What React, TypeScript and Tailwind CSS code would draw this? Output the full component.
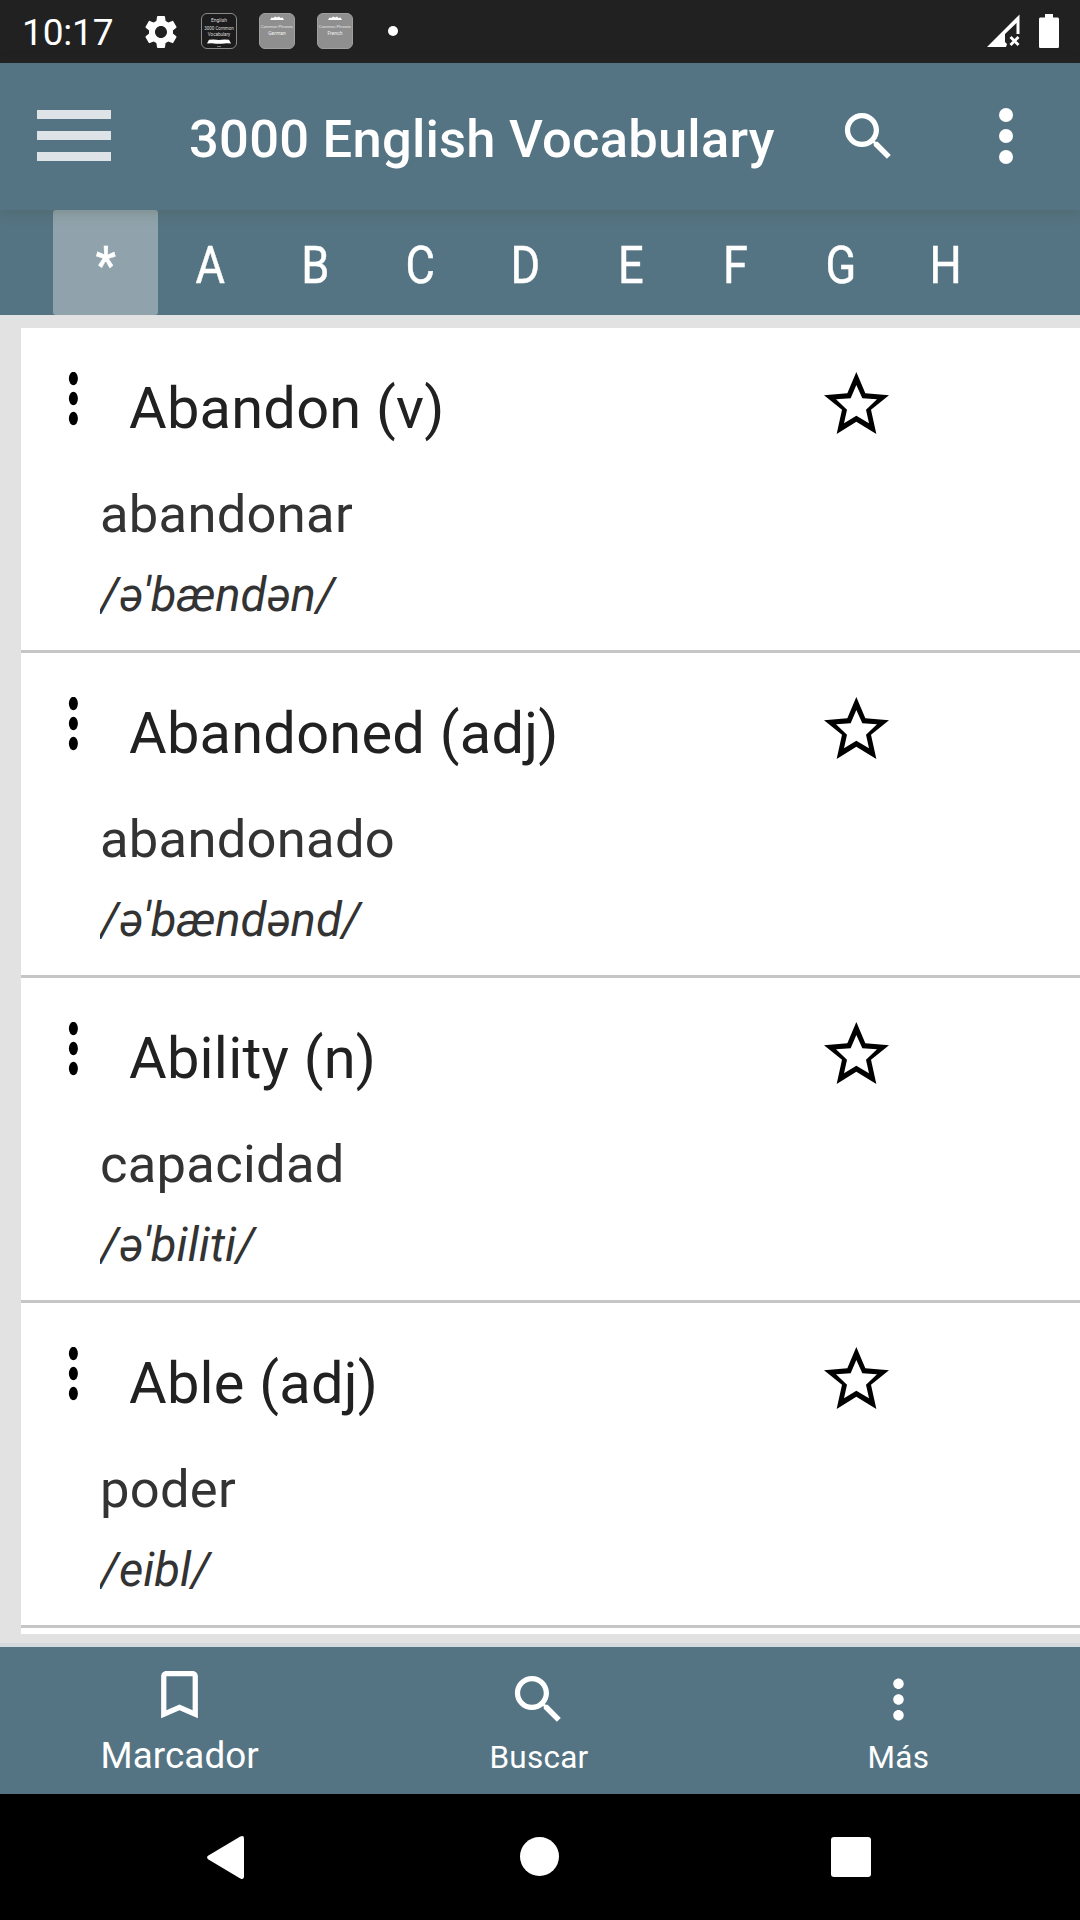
import React from "react";

const SEARCH =
  "M15.5 14h-.79l-.28-.27C15.41 12.59 16 11.11 16 9.5 16 5.91 13.09 3 9.5 3S3 5.91 3 9.5 5.91 16 9.5 16c1.61 0 3.09-.59 4.23-1.57l.27.28v.79l5 4.99L20.49 19l-4.99-5zm-6 0C7.01 14 5 11.99 5 9.5S7.01 5 9.5 5 14 7.01 14 9.5 11.99 14 9.5 14z";
const BOOKMARK =
  "M17 3H7c-1.1 0-1.99.9-1.99 2L5 21l7-3 7 3V5c0-1.1-.9-2-2-2zm0 15l-5-2.18L7 18V5h10v13z";
const MORE =
  "M12 8c1.1 0 2-.9 2-2s-.9-2-2-2-2 .9-2 2 .9 2 2 2zm0 2c-1.1 0-2 .9-2 2s.9 2 2 2 2-.9 2-2-.9-2-2-2zm0 6c-1.1 0-2 .9-2 2s.9 2 2 2 2-.9 2-2-.9-2-2-2z";
const GEAR =
  "M19.14 12.94c.04-.3.06-.61.06-.94 0-.32-.02-.64-.07-.94l2.03-1.58c.18-.14.23-.41.12-.61l-1.92-3.32c-.12-.22-.37-.29-.59-.22l-2.39.96c-.5-.38-1.03-.7-1.62-.94l-.36-2.54c-.04-.24-.24-.41-.48-.41h-3.84c-.24 0-.43.17-.47.41l-.36 2.54c-.59.24-1.13.57-1.62.94l-2.39-.96c-.22-.08-.47 0-.59.22L2.74 8.87c-.12.21-.08.47.12.61l2.03 1.58c-.05.3-.09.63-.09.94s.02.64.07.94l-2.03 1.58c-.18.14-.23.41-.12.61l1.92 3.32c.12.22.37.29.59.22l2.39-.96c.5.38 1.03.7 1.62.94l.36 2.54c.05.24.24.41.48.41h3.84c.24 0 .44-.17.47-.41l.36-2.54c.59-.24 1.13-.56 1.62-.94l2.39.96c.22.08.47 0 .59-.22l1.92-3.32c.12-.22.07-.47-.12-.61l-2.01-1.58zM12 15.6c-1.98 0-3.6-1.62-3.6-3.6s1.62-3.6 3.6-3.6 3.6 1.62 3.6 3.6-1.62 3.6-3.6 3.6z";

function Icon({ d, className }: { d: string; className: string }) {
  return (
    <svg viewBox="0 0 24 24" fill="currentColor" className={className}>
      <path d={d} />
    </svg>
  );
}

function PhraseBadge({ language }: { language: string }) {
  return (
    <div className="flex h-9 w-9 flex-col items-center overflow-hidden rounded-md border border-[#a0a0a0] bg-[#8f8f8f] pt-[2px] text-white">
      <svg viewBox="0 0 14 4" className="h-[4px] w-[14px] shrink-0" fill="#fff">
        <path d="M0 4 1.500 1.500l2 .6L5 .5l2 1L9 .5l1.500 1.600 2-.6L14 4z" />
      </svg>
      <span className="mt-[4px] text-[4px] leading-[5px] whitespace-nowrap text-[#e0e0e0]">Common Phrases</span>
      <span className="mt-px text-[5px] leading-[6px] text-[#f0f0f0]">{language}</span>
    </div>
  );
}

function StatusBar() {
  return (
    <header className="flex h-[63px] shrink-0 items-start bg-[#212121] pl-[22px] text-white">
      <span className="mt-3 w-[119px] text-[37px] leading-[42px] tracking-[-0.15px]">10:17</span>
      <Icon d={GEAR} className="mt-3 h-10 w-10 shrink-0" />
      <div className="mt-[13px] ml-5 flex gap-[22px]">
        <div className="flex h-9 w-9 flex-col items-center overflow-hidden rounded-md border border-[#8a8a8a] bg-[#1c1c1c] pt-[3px] text-[#dddddd]">
          <span className="text-[5px] leading-[6px]">English</span>
          <span className="mt-[3px] text-[4.5px] leading-[5.5px] whitespace-nowrap">3000 Common</span>
          <span className="text-[4.5px] leading-[5.5px]">Vocabulary</span>
          <svg viewBox="0 0 24 5" className="mt-[2px] h-[5px] w-6 shrink-0" fill="#fff">
            <path d="M2 .8q5-.8 10 .2Q17 0 22 .8l2 3.600q-6-.5-9 .3H9q-3-.8-9-.2z" />
          </svg>
          <span className="mt-[2px] h-px w-1 shrink-0 bg-[#777777]" />
        </div>
        <PhraseBadge language="German" />
        <PhraseBadge language="French" />
      </div>
      <span className="mt-[26px] ml-[35px] h-[10px] w-[10px] rounded-full bg-white" />
      <div className="mt-[14px] mr-[21px] ml-auto flex gap-[19px]">
        <svg viewBox="0 0 33 33" className="h-[33px] w-[33px]" fill="#fff">
          <path d="M0 33 32.500.5V20H29.500V9L18 20v8l2 2-1 3z" />
          <path d="m23.500 23 8 8m0-8-8 8" stroke="#fff" strokeWidth="2.800" />
        </svg>
        <svg viewBox="0 0 20 34" className="h-[34px] w-5" fill="#fff">
          <path d="M6 0h8v3.400h4.400c.9 0 1.600.7 1.600 1.600v27.400c0 .9-.7 1.600-1.600 1.600H1.600C.7 34 0 33.300 0 32.400V5c0-.9.7-1.600 1.600-1.600H6z" />
        </svg>
      </div>
    </header>
  );
}

function AppBar() {
  return (
    <div className="relative z-10 flex h-[147px] shrink-0 items-center bg-[#557483] text-white shadow-[0_2px_12px_rgba(60,80,50,0.28)]">
      <button className="mb-[2px] ml-[37px] flex w-[74px] flex-col gap-3">
        <span className="h-[9px] bg-[#dde3e7]" />
        <span className="h-[9px] bg-[#dde3e7]" />
        <span className="h-[9px] bg-[#dde3e7]" />
      </button>
      <h1 className="mt-[4px] ml-[78px] w-[648px] text-[52.5px] leading-[62px] font-medium tracking-[0.23px] whitespace-nowrap">
        3000 English Vocabulary
      </h1>
      <Icon d={SEARCH} className="h-[63px] w-[63px] shrink-0" />
      <div className="mb-[2px] ml-[99px] flex flex-col gap-[7px]">
        <span className="h-[14px] w-[14px] rounded-full bg-white" />
        <span className="h-[14px] w-[14px] rounded-full bg-white" />
        <span className="h-[14px] w-[14px] rounded-full bg-white" />
      </div>
    </div>
  );
}

const LETTERS = ["*", "A", "B", "C", "D", "E", "F", "G", "H"];

function LetterTabs() {
  return (
    <nav className="flex h-[105px] shrink-0 bg-[#557483] pl-[53px] text-[52.5px] leading-[62px] text-white">
      {LETTERS.map((letter, i) => (
        <button
          key={letter}
          className={
            i === 0
              ? "flex h-[105px] w-[105px] items-center justify-center rounded-[3px] bg-[#90a3ac] pt-1 font-medium"
              : "flex h-[105px] w-[105px] items-center justify-center pt-1"
          }
        >
          <span className="inline-block scale-x-[0.86] [-webkit-text-stroke:0.5px_white]">{letter}</span>
        </button>
      ))}
    </nav>
  );
}

const WORDS = [
  { word: "Abandon (v)", meaning: "abandonar", ipa: "/ə'bændən/" },
  { word: "Abandoned (adj)", meaning: "abandonado", ipa: "/ə'bændənd/" },
  { word: "Ability (n)", meaning: "capacidad", ipa: "/ə'biliti/" },
  { word: "Able (adj)", meaning: "poder", ipa: "/eibl/" },
];

function WordRow({ word, meaning, ipa }: { word: string; meaning: string; ipa: string }) {
  return (
    <li className="h-[325px] border-b-[3px] border-[#c6c6c6] pt-11">
      <div className="flex h-[70px] items-start">
        <svg viewBox="0 0 10 54" className="ml-[47px] h-[54px] w-[10px] shrink-0">
          <ellipse cx="5.400" cy="6.500" rx="4.500" ry="6.800" />
          <ellipse cx="5.400" cy="26.500" rx="4.500" ry="6.800" />
          <ellipse cx="5.400" cy="46.500" rx="4.500" ry="6.800" />
        </svg>
        <h2 className="mt-[2px] ml-[51px] w-[695px] text-[57.75px] leading-[68px] tracking-[0.24px] text-[#212121]">
          {word}
        </h2>
        <svg viewBox="12 12 195 186" className="h-[62px] w-[65px] shrink-0" fillRule="evenodd">
          <path d="M109 12 136 76 207 82 153 125 169 198 109 161 50 198 66 125 12 82 82 76zM109 51 92 91 48 94 81 125 72 166 109 143 147 166 138 125 171 94 127 91z" />
        </svg>
      </div>
      <p className="mt-[41px] ml-[79px] text-[52.5px] leading-[62px] tracking-[0.28px] text-[#333333]">{meaning}</p>
      <p className="mt-[22px] ml-[79px] overflow-hidden text-[47.25px] leading-[56px] text-[#333333] italic">{ipa}</p>
    </li>
  );
}

function BottomBar() {
  return (
    <nav className="grid h-[147px] w-[1078px] shrink-0 grid-cols-3 text-white">
      <button className="flex flex-col items-center pt-4">
        <Icon d={BOOKMARK} className="h-[63px] w-[63px]" />
        <span className="mt-[8px] text-[36.75px] leading-[43px] tracking-[0.1px]">Marcador</span>
      </button>
      <button className="flex flex-col items-center pt-[21px]">
        <Icon d={SEARCH} className="h-[63px] w-[63px]" />
        <span className="mt-[8px] text-[31.5px] leading-[37px] tracking-[0.25px]">Buscar</span>
      </button>
      <button className="flex flex-col items-center pt-[21px]">
        <Icon d={MORE} className="h-[63px] w-[63px]" />
        <span className="mt-[8px] text-[31.5px] leading-[37px] tracking-[0.25px]">Más</span>
      </button>
    </nav>
  );
}

function SystemNav() {
  return (
    <footer className="flex h-[126px] items-start bg-black pl-[207px]">
      <svg viewBox="0 0 37 43" className="mt-[42px] h-[43px] w-[37px]" fill="#fff">
        <path d="M1 19.800 33.300.6Q37-1 37 2.500v38Q37 44 33.300 42.400L1 23.200Q-.8 21.500 1 19.800z" />
      </svg>
      <span className="mt-[43px] ml-[276px] h-[39px] w-[39px] rounded-full bg-white" />
      <span className="mt-[43px] ml-[272px] h-10 w-10 rounded-[3px] bg-white" />
    </footer>
  );
}

export default function App() {
  return (
    <div className="flex h-[1920px] w-[1080px] flex-col overflow-hidden bg-[#e2e2e2] font-['Roboto',sans-serif]">
      <StatusBar />
      <AppBar />
      <LetterTabs />
      <main className="h-[1332px] shrink-0 border-b-4 border-[#d5dadd] pt-[13px] pl-[21px]">
        <ul className="h-[1306px] overflow-hidden bg-white">
          {WORDS.map((w) => (
            <WordRow key={w.word} {...w} />
          ))}
        </ul>
      </main>
      <div className="bg-[#557483]">
        <BottomBar />
      </div>
      <SystemNav />
    </div>
  );
}
